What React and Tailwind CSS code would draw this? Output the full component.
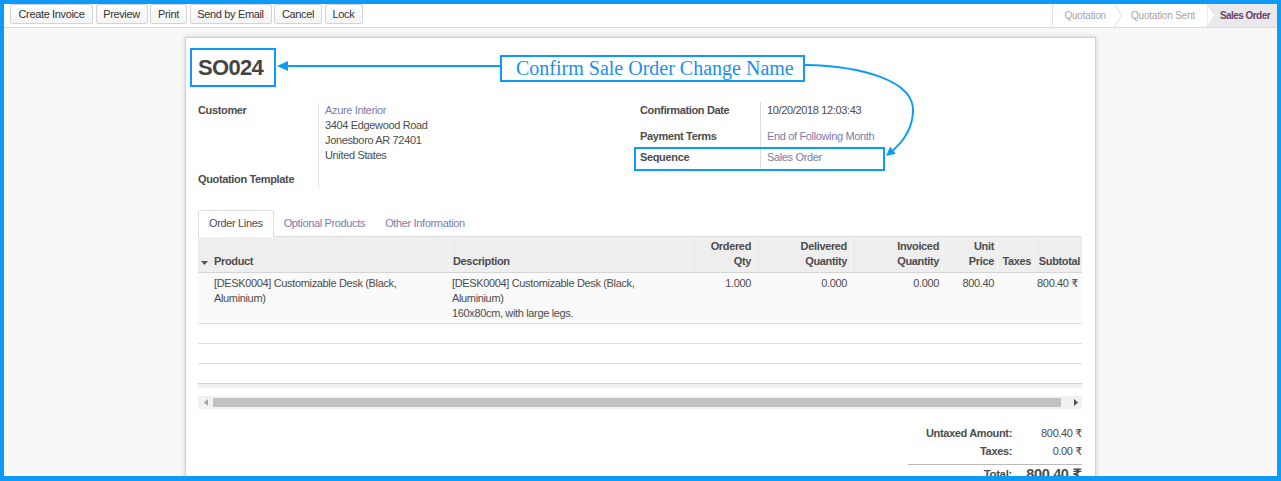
export default function App() {
  const cols = "grid grid-cols-[12px_239px_240px_64px_97px_92px_55px_36px_49px]";
  const blue = "#0e9bf7";
  const btn =
    "h-[20px] flex items-center justify-center border border-[#d4d4d4] rounded-[2px] bg-gradient-to-b from-white to-[#f4f4f4] text-[#333] leading-[18px]";
  const hcell = "flex flex-col justify-end pb-[3px] leading-[15px] border-l border-[#f7f7f7]";
  return (
    <div className="relative w-[1281px] h-[481px] overflow-hidden bg-[#0e9bf7] pt-[4px] px-[4px] pb-[5px] font-['Liberation_Sans','DejaVu_Sans',sans-serif] text-[11px] tracking-[-0.35px] text-[#4c4c4c]">
      <div className="w-full h-full flex flex-col bg-[#f8f8f8] overflow-hidden">
        {/* toolbar */}
        <div className="h-[24px] shrink-0 bg-white border-b border-[#dcdcdc] flex justify-between">
          <div className="flex items-start gap-[2.5px] pl-[6px]">
            <div className={`${btn} w-[83px]`}>Create Invoice</div>
            <div className={`${btn} w-[52px]`}>Preview</div>
            <div className={`${btn} w-[37px]`}>Print</div>
            <div className={`${btn} w-[82px]`}>Send by Email</div>
            <div className={`${btn} w-[48px]`}>Cancel</div>
            <div className={`${btn} w-[38px]`}>Lock</div>
          </div>
          <div className="flex h-full items-stretch border-l border-[#e3e3e3] text-[10px] tracking-[-0.2px]">
            <div className="flex items-center pl-[11px] pr-[8px] text-[#a6a6a6]">Quotation</div>
            <svg width="8" height="23" viewBox="0 0 8 23" className="shrink-0">
              <polyline points="0,0 8,11.5 0,23" fill="none" stroke="#dddddd" strokeWidth="1" />
            </svg>
            <div className="flex items-center pl-[9px] pr-[12px] text-[#a6a6a6]">Quotation Sent</div>
            <div className="relative flex items-center bg-[#e9e9ee] pl-[13px] pr-[7px] text-[#6d4466] font-bold tracking-[-0.55px]">
              <svg width="8" height="23" viewBox="0 0 8 23" className="absolute left-0 top-0">
                <polygon points="0,0 8,11.5 0,23" fill="#ffffff" stroke="#dddddd" strokeWidth="1" />
              </svg>
              Sales Order
            </div>
          </div>
        </div>

        {/* main */}
        <div className="flex-1 overflow-hidden">
          <div className="ml-[181px] mt-[9px] w-[911px] bg-white border border-[#cfcfd6] shadow-[0_0_5px_rgba(0,0,0,0.18)] pl-[12px] pr-[13px] pb-[40px]">
            {/* title */}
            <div className="flex">
              <div className="mt-[10px] -ml-[8px] border-2 border-[#0e9bf7] pl-[6px] pr-[11px] text-[22px] font-bold leading-[35px] tracking-[-0.7px] text-[#444]">
                SO024
              </div>
            </div>

            {/* groups */}
            <div className="mt-[16px] grid grid-cols-2 items-start">
              <div className="grid grid-cols-[120px_1fr] content-start">
                <div className="font-bold leading-[15px] pb-[8px]">Customer</div>
                <div className="border-l border-[#dddddd] pl-[6px] leading-[15px] pb-[8px]">
                  <div className="text-[#7c7bad]">Azure Interior</div>
                  <div>3404 Edgewood Road</div>
                  <div>Jonesboro AR 72401</div>
                  <div>United States</div>
                </div>
                <div className="font-bold leading-[16px]">Quotation Template</div>
                <div className="border-l border-[#dddddd]"></div>
              </div>
              <div className="grid grid-cols-[120px_1fr] content-start leading-[15px] -mt-[1px]">
                <div className="h-[25px] pt-[1px] font-bold">Confirmation Date</div>
                <div className="h-[25px] pt-[1px] border-l border-[#dddddd] pl-[6px]">10/20/2018 12:03:43</div>
                <div className="h-[21px] pt-[1.5px] font-bold">Payment Terms</div>
                <div className="h-[21px] pt-[1.5px] border-l border-[#dddddd] pl-[6px] text-[#7c7bad]">End of Following Month</div>
                <div className="h-[22px] pt-[1.5px] font-bold">Sequence</div>
                <div className="h-[22px] pt-[1.5px] border-l border-[#dddddd] pl-[6px] text-[#7c7bad]">Sales Order</div>
              </div>
            </div>

            {/* tabs */}
            <div className="mt-[23px] flex h-[27px] border-b border-[#dddddd]">
              <div className="h-[27px] flex items-center px-[10px] border border-[#dddddd] border-b-white bg-white rounded-t-[2px] text-[#4c4c4c]">
                Order Lines
              </div>
              <div className="h-[27px] flex items-center px-[10px] text-[#7c7bad]">Optional Products</div>
              <div className="h-[27px] flex items-center px-[10px] text-[#7c7bad]">Other Information</div>
            </div>

            {/* table */}
            <div className="w-[884px]">
              <div className={`${cols} h-[36px] bg-[#eeeeee] border-b border-[#d5d5d5] font-bold text-[#4c4c4c]`}>
                <div className="flex items-end justify-center pb-[7px]">
                  <svg width="7" height="4" viewBox="0 0 7 4">
                    <polygon points="0,0 7,0 3.5,4" fill="#555" />
                  </svg>
                </div>
                <div className="flex flex-col justify-end pb-[3px] leading-[15px] pl-[4px]">Product</div>
                <div className={`${hcell} pl-[3px]`}>Description</div>
                <div className={`${hcell} items-end pr-[2px] text-right`}>
                  <span>Ordered</span>
                  <span>Qty</span>
                </div>
                <div className={`${hcell} items-end pr-[3px] text-right`}>
                  <span>Delivered</span>
                  <span>Quantity</span>
                </div>
                <div className={`${hcell} items-end pr-[3px] text-right`}>
                  <span>Invoiced</span>
                  <span>Quantity</span>
                </div>
                <div className={`${hcell} items-end pr-[3px] text-right`}>
                  <span>Unit</span>
                  <span>Price</span>
                </div>
                <div className={`${hcell} items-end pr-[2px] text-right`}>Taxes</div>
                <div className={`${hcell} items-end pr-[2px] text-right`}>Subtotal</div>
              </div>
              <div className={`${cols} h-[51px] bg-[#fafafa] border-b border-[#dddddd] leading-[15px] pt-[3px]`}>
                <div></div>
                <div className="pl-[4px]">
                  [DESK0004] Customizable Desk (Black,
                  <br />
                  Aluminium)
                </div>
                <div className="pl-[3px]">
                  [DESK0004] Customizable Desk (Black,
                  <br />
                  Aluminium)
                  <br />
                  160x80cm, with large legs.
                </div>
                <div className="text-right pr-[2px]">1.000</div>
                <div className="text-right pr-[3px]">0.000</div>
                <div className="text-right pr-[3px]">0.000</div>
                <div className="text-right pr-[3px]">800.40</div>
                <div></div>
                <div className="text-right pr-[4px] whitespace-nowrap">800.40 ₹</div>
              </div>
              <div className="h-[20px] border-b border-[#dddddd]"></div>
              <div className="h-[20px] border-b border-[#dddddd]"></div>
              <div className="h-[19px]"></div>
              <div className="h-[5px] bg-[#eeeeee] border-t border-[#d0d0d0]"></div>

              {/* scrollbar */}
              <div className="mt-[8px] h-[13px] bg-[#f1f1f1] flex items-center">
                <div className="w-[15px] flex justify-center">
                  <svg width="4" height="7" viewBox="0 0 4 7">
                    <polygon points="4,0 4,7 0,3.5" fill="#a3a3a3" />
                  </svg>
                </div>
                <div className="flex-1 h-[9px] bg-[#c1c1c1]"></div>
                <div className="w-[21px] flex justify-end pr-[4px]">
                  <svg width="4" height="7" viewBox="0 0 4 7">
                    <polygon points="0,0 4,3.5 0,7" fill="#505050" />
                  </svg>
                </div>
              </div>
            </div>

            {/* totals */}
            <div className="mt-[15px] flex justify-end">
              <div className="w-[174px]">
                <div className="grid grid-cols-[104px_70px] leading-[18px] text-right">
                  <div className="font-bold">Untaxed Amount:</div>
                  <div className="whitespace-nowrap">800.40 ₹</div>
                  <div className="font-bold">Taxes:</div>
                  <div className="whitespace-nowrap">0.00 ₹</div>
                </div>
                <div className="mt-[4px] border-t border-[#bbbbbb] grid grid-cols-[104px_70px] items-center text-right leading-[18px]">
                  <div className="font-bold text-[11.5px]">Total:</div>
                  <div className="font-bold text-[14.5px] whitespace-nowrap">800.40 ₹</div>
                </div>
              </div>
            </div>
          </div>
        </div>
      </div>

      {/* annotation */}
      <div className="absolute left-[500px] top-[55px] w-[305px] h-[27px] border-2 border-[#0e9bf7] bg-white flex items-center pl-[14px] font-['Liberation_Serif',serif] text-[20px] tracking-normal text-[#1b8ef5] leading-[23px]">
        Confirm Sale Order Change Name
      </div>
      <svg className="absolute left-0 top-0 pointer-events-none" width="1281" height="481" viewBox="0 0 1281 481">
        <line x1="500" y1="66" x2="285" y2="66" stroke={blue} strokeWidth="2" />
        <polygon points="277,66 288,61 288,71" fill={blue} />
        <path d="M805,65 C860,66 915,80 913,112 C912,130 902,143 891,152" fill="none" stroke={blue} strokeWidth="2" />
        <polygon points="886,156 895.7,153.8 890.1,146.8" fill={blue} />
        <rect x="635" y="148" width="249" height="22" fill="none" stroke={blue} strokeWidth="2" />
      </svg>
    </div>
  );
}
